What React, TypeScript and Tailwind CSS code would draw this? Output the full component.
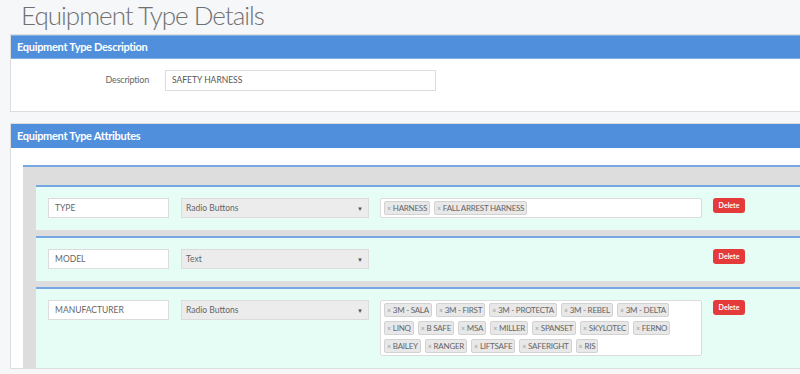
import React from 'react';

interface Attribute {
    name: string;
    type: string;
    values: string[];
}

const attributes: Attribute[] = [
    { name: 'TYPE', type: 'Radio Buttons', values: ['HARNESS', 'FALL ARREST HARNESS'] },
    { name: 'MODEL', type: 'Text', values: [] },
    {
        name: 'MANUFACTURER',
        type: 'Radio Buttons',
        values: [
            '3M - SALA', '3M - FIRST', '3M - PROTECTA', '3M - REBEL', '3M - DELTA',
            'LINQ', 'B SAFE', 'MSA', 'MILLER', 'SPANSET', 'SKYLOTEC', 'FERNO',
            'BAILEY', 'RANGER', 'LIFTSAFE', 'SAFERIGHT', 'RIS',
        ],
    },
];

function Tag({ label }: { label: string }) {
    return (
        <span className="flex items-center h-[14px] px-[2px] gap-[2px] bg-[#e8e8e8] border border-[#d2d2d2] rounded-[2px] text-[8px] leading-none text-[#666] tracking-[-0.25px] whitespace-nowrap">
            <span className="text-[7px] text-[#999]">×</span>
            {label}
        </span>
    );
}

function AttributeRow({ attr }: { attr: Attribute }) {
    return (
        <div className="flex items-start bg-[#e6fdf6] border-t-2 border-[#76a7e3] pl-3 pt-[11px] pb-3 min-h-[45px]">
            <div className="w-[121px] h-[20px] bg-white border border-[#dcdcdc] flex items-center px-[6px] text-[8.5px] text-[#666]">
                {attr.name}
            </div>
            <div className="ml-3 w-[188px] h-[20px] bg-[#ececec] border border-[#dcdcdc] flex items-center justify-between pl-[4px] pr-[5px] text-[8.5px] text-[#666]">
                <span>{attr.type}</span>
                <span className="text-[6px] text-[#555]">▼</span>
            </div>
            <div className="w-[322px] ml-[11px] mr-[11px]">
                {attr.values.length > 0 && (
                    <div className="min-h-[20px] bg-white border border-[#dcdcdc] rounded-[2px] flex flex-wrap gap-x-[4px] gap-y-[4px] px-[3px] pt-[2px] pb-[2px]">
                        {attr.values.map((v) => (
                            <Tag key={v} label={v} />
                        ))}
                    </div>
                )}
            </div>
            <button
                type="button"
                className="w-[32px] h-[15px] bg-[#e53a3a] rounded-[3px] text-white text-[7px] font-bold leading-none"
            >
                Delete
            </button>
        </div>
    );
}

export default function App() {
    return (
        <div
            className="w-[800px] h-[374px] overflow-hidden bg-[#f6f7f9]"
            style={{ fontFamily: 'Lato, "Open Sans", sans-serif' }}
        >
            <h1 className="pl-[21px] h-[34px] text-[26px] font-light text-[#707070] leading-[30px] tracking-[-1px]">
                Equipment Type Details
            </h1>

            {/* Description panel */}
            <div className="ml-[10px] w-[820px] border border-[#dddddd] bg-white">
                <div className="h-[24px] bg-[#4f8fdc] border-y border-[#7fb0ea] flex items-center pl-[6px] text-[11px] font-bold text-white tracking-[-0.3px]">
                    Equipment Type Description
                </div>
                <div className="h-[52px] flex items-start pt-[11px]">
                    <div className="w-[138px] text-right text-[9px] text-[#666] leading-[20px] tracking-[-0.2px]">Description</div>
                    <div className="ml-[16px] w-[271px] h-[21px] border border-[#dcdcdc] flex items-center px-[6px] text-[8.5px] text-[#555]">
                        SAFETY HARNESS
                    </div>
                </div>
            </div>

            {/* Attributes panel */}
            <div className="mt-[11px] ml-[10px] w-[820px] border border-[#dddddd] bg-white">
                <div className="h-[24px] bg-[#4f8fdc] flex items-center pl-[6px] text-[11px] font-bold text-white tracking-[-0.3px]">
                    Equipment Type Attributes
                </div>
                <div className="pl-[12px] pt-[17px]">
                    <div className="bg-[#dddddd] border-t-2 border-[#76a7e3] pl-[13px] pt-[18px] flex flex-col gap-[6px]">
                        {attributes.map((a) => (
                            <AttributeRow key={a.name} attr={a} />
                        ))}
                    </div>
                </div>
            </div>
        </div>
    );
}
